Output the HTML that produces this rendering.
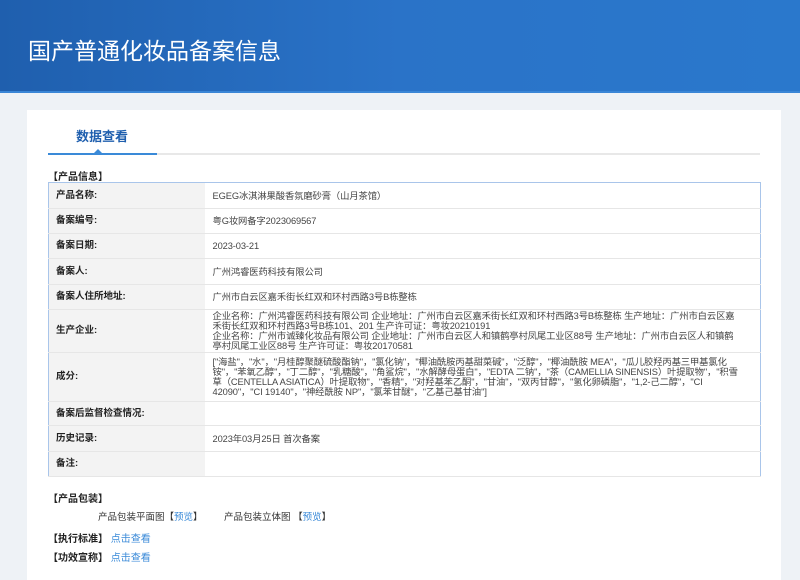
<!DOCTYPE html>
<html><head><meta charset="utf-8"><style>
*{margin:0;padding:0;box-sizing:border-box}
body{width:800px;height:573px;overflow:hidden;background:#eef2f6;font-family:"Liberation Sans","Noto Sans CJK SC",sans-serif;color:#333;position:relative}
.hd{position:absolute;left:0;top:0;width:800px;height:93px;background:linear-gradient(90deg,#1f5fae 0%,#2a73c8 50%,#2a78cc 100%);border-bottom:2px solid #3a86d6}
.hd h1{position:absolute;left:28px;top:32px;font-size:23px;font-weight:normal;color:#fff;font-family:"Noto Sans CJK SC",sans-serif}
.card{position:absolute;left:27px;top:110px;width:754px;height:470px;background:#fff}
.tab{position:absolute;left:76px;top:126px;font-size:13px;color:#1f5fae;font-weight:bold}
.line{position:absolute;left:48px;top:153px;width:712px;height:2px;background:#e8e8e8}
.line2{position:absolute;left:48px;top:153px;width:109px;height:2px;background:#3a8ad8}
.tri{position:absolute;left:94px;top:149px;width:0;height:0;border-left:4px solid transparent;border-right:4px solid transparent;border-bottom:4px solid #3a8ad8}
.sec{position:absolute;font-size:10px;font-weight:bold;color:#222}
table{position:absolute;left:48px;top:182px;width:713px;border-collapse:collapse;border:1px solid #a9c5ea;font-size:9.5px}
td{border-bottom:1px solid #e6e6e6;vertical-align:middle;line-height:10px}
td.l{width:156px;background:#f3f3f3;font-weight:bold;padding-left:7px;color:#222}
td.v{padding:0 20px 0 8px;color:#444;font-size:9.3px;letter-spacing:-0.1px}
.t{position:absolute;font-size:9.5px;color:#333}
a{color:#3a8ad8;text-decoration:none}
</style></head><body>
<div class="hd"><h1>国产普通化妆品备案信息</h1></div>
<div class="card"></div>
<div class="tab">数据查看</div>
<div class="line"></div><div class="line2"></div><div class="tri"></div>
<div class="sec" style="left:48px;top:168px">【产品信息】</div>
<table>
<tr style="height:26px"><td class="l">产品名称:</td><td class="v">EGEG冰淇淋果酸香氛磨砂膏（山月茶馆）</td></tr>
<tr style="height:25px"><td class="l">备案编号:</td><td class="v">粤G妆网备字2023069567</td></tr>
<tr style="height:25px"><td class="l">备案日期:</td><td class="v">2023-03-21</td></tr>
<tr style="height:26px"><td class="l">备案人:</td><td class="v">广州鸿睿医药科技有限公司</td></tr>
<tr style="height:25px"><td class="l">备案人住所地址:</td><td class="v">广州市白云区嘉禾街长红双和环村西路3号B栋整栋</td></tr>
<tr style="height:43px"><td class="l">生产企业:</td><td class="v">企业名称：广州鸿睿医药科技有限公司 企业地址：广州市白云区嘉禾街长红双和环村西路3号B栋整栋 生产地址：广州市白云区嘉禾街长红双和环村西路3号B栋101、201 生产许可证：粤妆20210191<br>企业名称：广州市诚臻化妆品有限公司 企业地址：广州市白云区人和镇鹤亭村凤尾工业区88号 生产地址：广州市白云区人和镇鹤亭村凤尾工业区88号 生产许可证：粤妆20170581</td></tr>
<tr style="height:49px"><td class="l">成分:</td><td class="v">["海盐"，"水"，"月桂醇聚醚硫酸酯钠"，"氯化钠"，"椰油酰胺丙基甜菜碱"，"泛醇"，"椰油酰胺 MEA"，"瓜儿胶羟丙基三甲基氯化铵"，"苯氧乙醇"，"丁二醇"，"乳糖酸"，"角鲨烷"，"水解酵母蛋白"，"EDTA 二钠"，"茶（CAMELLIA SINENSIS）叶提取物"，"积雪草（CENTELLA ASIATICA）叶提取物"，"香精"，"对羟基苯乙酮"，"甘油"，"双丙甘醇"，"氢化卵磷脂"，"1,2-己二醇"，"CI 42090"，"CI 19140"，"神经酰胺 NP"，"氯苯甘醚"，"乙基己基甘油"]</td></tr>
<tr style="height:24px"><td class="l">备案后监督检查情况:</td><td class="v"></td></tr>
<tr style="height:26px"><td class="l">历史记录:</td><td class="v">2023年03月25日 首次备案</td></tr>
<tr style="height:25px"><td class="l">备注:</td><td class="v"></td></tr>
</table>
<div class="sec" style="left:48px;top:490px">【产品包装】</div>
<div class="t" style="left:98px;top:509px">产品包装平面图【<a>预览</a>】</div>
<div class="t" style="left:224px;top:509px">产品包装立体图 【<a>预览</a>】</div>
<div class="sec" style="left:48px;top:530px">【执行标准】 <a style="font-weight:normal">点击查看</a></div>
<div class="sec" style="left:48px;top:549px">【功效宣称】 <a style="font-weight:normal">点击查看</a></div>
</body></html>
